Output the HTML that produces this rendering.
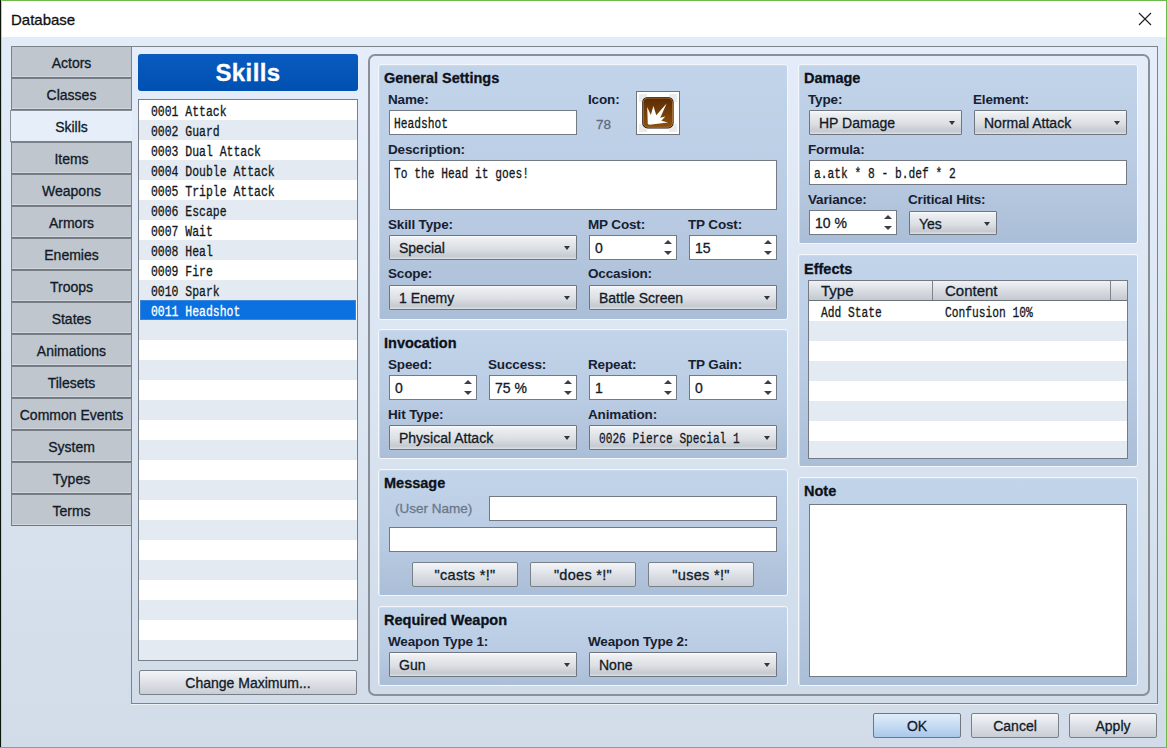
<!DOCTYPE html>
<html><head><meta charset="utf-8">
<style>
*{margin:0;padding:0;box-sizing:border-box}
html,body{width:1167px;height:748px;overflow:hidden}
body{position:relative;font-family:"Liberation Sans",sans-serif;color:#111a28;
background:linear-gradient(#e2ecf9 0px,#e2ecf9 40px,#d2dce8 748px);-webkit-text-stroke:0.3px currentColor}
.a{position:absolute}
.t{position:absolute;white-space:nowrap;font-size:14px;line-height:16px}
.b{font-weight:bold}
.m{font-family:"Liberation Mono",monospace}
#title{left:0;top:0;width:1167px;height:37px;background:#fff}
#gtop{left:0;top:0;width:1167px;height:1px;background:#6fb84a}
#gleft{left:0;top:0;width:2px;height:748px;background:linear-gradient(90deg,#0a160a 0,#0a160a 1px,#b9d3b4 1px)}
#gright{left:1166px;top:0;width:1px;height:748px;background:#6fb84a}
#gbot{left:0;top:747px;width:1167px;height:1px;background:#6fb84a}
.tab{position:absolute;left:11px;width:120px;height:32px;background:#c0c6ce;border:1px solid #7b8189;border-right:none;border-bottom:1px solid #6f757d;box-shadow:inset 0 -1px 0 #d3d8de;
 text-align:center;font-size:14px;line-height:33px;color:#111a28}
.tab.sel{left:10px;width:122px;z-index:2;background:#e6eefa;border-color:#8a9098;border-bottom:1px solid #7b8189;box-shadow:none}
#frame{left:131px;top:46px;width:1027px;height:658px;border:1px solid #7d838b;border-bottom:1px solid #7d838b;box-shadow:0 1px 0 #eef3f9;
 background:linear-gradient(#e4edf9 0,#dbe5f1 400px,#d1dce8 658px)}
#skhead{left:138px;top:54px;width:220px;height:37px;background:linear-gradient(#0a5bc0,#0050b0);border-radius:3px;color:#fff;font-weight:bold;font-size:24px;line-height:38px;letter-spacing:0.4px;text-align:center}
#list{left:138px;top:99px;width:220px;height:562px;border:1px solid #7a8088;background:repeating-linear-gradient(#fff 0,#fff 20px,#e4eaf1 20px,#e4eaf1 40px)}
.row{position:absolute;left:12px;height:20px;line-height:24px;font-size:14.5px;font-family:"Liberation Mono",monospace;color:#101820;transform:scaleX(0.79);transform-origin:0 0}
#selrow{left:1px;top:200px;width:216px;height:20px;background:#0b70e0;border:1px solid #3a85d6}
.btn{position:absolute;border:1px solid #7a8088;border-radius:2px;background:linear-gradient(#f3f5f8,#dde1e6 50%,#c9ced5);text-align:center;font-size:14px;color:#111a28}

#outer{left:368px;top:54px;width:782px;height:642px;border:2px solid #8a9099;border-radius:7px;background:linear-gradient(#e3ecf8,#dbe5f1 50%,#cfdbe9)}
.pnl{position:absolute;background:linear-gradient(#c2d4ea,#b9cce3 55%,#abbed7);border:1px solid #f3f7fc;border-radius:3px;box-shadow:inset 1px 1px 0 #cad9ec}
.h{position:absolute;white-space:nowrap;font-weight:bold;font-size:14.5px;line-height:18px;color:#0c121c;margin-top:-1px}
.l{position:absolute;white-space:nowrap;font-weight:bold;font-size:13.5px;letter-spacing:-0.15px;line-height:16px;color:#172030;-webkit-text-stroke:0;margin-top:-1px}
.inp{position:absolute;background:#fff;border:1px solid #737a83}
.mv{position:absolute;white-space:nowrap;font-family:"Liberation Mono",monospace;font-size:14.5px;line-height:26px;left:4px;top:0;color:#101820;transform:scaleX(0.776);transform-origin:0 0}
.cmb{position:absolute;height:25px;border:1px solid #6f767f;border-radius:1px;background:linear-gradient(#fafbfc 0,#eceef1 12%,#dcdfe3 55%,#c5cad1 88%,#dde0e5 100%)}
.cmb span{position:absolute;left:9px;top:0;line-height:25px;font-size:14px;white-space:nowrap;color:#111a28}
.cmb span.mv{font-size:14.5px;line-height:27px}
.cmb i{position:absolute;right:6px;top:10px;width:0;height:0;border-left:3.5px solid transparent;border-right:3.5px solid transparent;border-top:4px solid #30353c}
.spn{position:absolute;height:25px;background:#fff;border:1px solid #737a83}
.spn span{position:absolute;left:5px;top:0;line-height:25px;font-size:14px;white-space:nowrap;color:#111a28}
.spn i{position:absolute;right:4px;top:4px;width:8px;height:16px}
.spn i::before{content:"";position:absolute;left:0;top:-0.5px;border-left:4px solid transparent;border-right:4px solid transparent;border-bottom:4.5px solid #3a3f46}
.spn i::after{content:"";position:absolute;left:0;top:11px;border-left:4px solid transparent;border-right:4px solid transparent;border-top:4.5px solid #3a3f46}
#iconbox{left:636px;top:91px;width:44px;height:44px;background:#fff;border:1px solid #6f757d}
#tbl{left:808px;top:280px;width:320px;height:179px;border:1px solid #737a83;background:repeating-linear-gradient(#fff 0,#fff 20px,#e4eaf1 20px,#e4eaf1 40px) 0 20px/100% 100% no-repeat,#fff}
#thead{left:0;top:0;width:318px;height:20px;background:linear-gradient(#f0f2f5,#d9dde2 50%,#c4c9d0);border-bottom:1px solid #6d737b}
#thead span{position:absolute;top:0;line-height:20px;font-size:15px;color:#111a28}
#thead b{position:absolute;top:0;width:1px;height:19px;background:#7d838b}
</style></head><body>
<div class="a" id="title"></div>
<div class="t" style="left:11px;top:11px;font-size:15px;line-height:18px;color:#111">Database</div>
<svg class="a" style="left:1137px;top:11px" width="16" height="16"><path d="M2 2L14 14M14 2L2 14" stroke="#222" stroke-width="1.2"/></svg>
<div class="a" id="gtop"></div><div class="a" id="gleft"></div><div class="a" id="gright"></div><div class="a" id="gbot"></div>

<div class="a" id="frame"></div>

<div class="tab" style="top:46px">Actors</div>
<div class="tab" style="top:78px">Classes</div>
<div class="tab sel" style="top:110px">Skills</div>
<div class="tab" style="top:142px">Items</div>
<div class="tab" style="top:174px">Weapons</div>
<div class="tab" style="top:206px">Armors</div>
<div class="tab" style="top:238px">Enemies</div>
<div class="tab" style="top:270px">Troops</div>
<div class="tab" style="top:302px">States</div>
<div class="tab" style="top:334px">Animations</div>
<div class="tab" style="top:366px">Tilesets</div>
<div class="tab" style="top:398px">Common Events</div>
<div class="tab" style="top:430px">System</div>
<div class="tab" style="top:462px">Types</div>
<div class="tab" style="top:494px">Terms</div>

<div class="a" id="skhead">Skills</div>
<div class="a" id="list">
<div class="a" id="selrow"></div>
<div class="row" style="top:0">0001 Attack</div>
<div class="row" style="top:20px">0002 Guard</div>
<div class="row" style="top:40px">0003 Dual Attack</div>
<div class="row" style="top:60px">0004 Double Attack</div>
<div class="row" style="top:80px">0005 Triple Attack</div>
<div class="row" style="top:100px">0006 Escape</div>
<div class="row" style="top:120px">0007 Wait</div>
<div class="row" style="top:140px">0008 Heal</div>
<div class="row" style="top:160px">0009 Fire</div>
<div class="row" style="top:180px">0010 Spark</div>
<div class="row" style="top:200px;color:#fff">0011 Headshot</div>
</div>
<div class="btn" style="left:139px;top:670px;width:218px;height:25px;line-height:25px">Change Maximum...</div>


<div class="a" id="outer"></div>
<div class="pnl" style="left:378px;top:64px;width:410px;height:256px"></div>
<div class="pnl" style="left:378px;top:329px;width:410px;height:130px"></div>
<div class="pnl" style="left:378px;top:469px;width:410px;height:127px"></div>
<div class="pnl" style="left:378px;top:606px;width:410px;height:80px"></div>
<div class="pnl" style="left:798px;top:64px;width:340px;height:180px"></div>
<div class="pnl" style="left:798px;top:254px;width:340px;height:213px"></div>
<div class="pnl" style="left:798px;top:477px;width:340px;height:209px"></div>

<div class="h" style="left:384px;top:70px">General Settings</div>
<div class="l" style="left:388px;top:93px">Name:</div>
<div class="inp" style="left:389px;top:110px;width:188px;height:25px"><span class="mv">Headshot</span></div>
<div class="l" style="left:588px;top:93px">Icon:</div>
<div class="t" style="left:596px;top:117px;font-size:13.5px;color:#5d6c7e">78</div>
<div class="a" id="iconbox"><svg width="40" height="40" style="position:absolute;left:1px;top:1px" viewBox="0 0 40 40">
<defs><linearGradient id="bg" x1="0" y1="0" x2="0" y2="1"><stop offset="0" stop-color="#5a2b02"/><stop offset="0.6" stop-color="#7a4208"/><stop offset="1" stop-color="#8a5010"/></linearGradient></defs>
<rect x="1" y="1" width="38" height="38" fill="#ebebeb"/>
<rect x="9" y="1" width="22" height="38" fill="#fff"/><rect x="1" y="9" width="38" height="22" fill="#fff"/>
<rect x="4.2" y="3.9" width="31.4" height="31.5" rx="5.5" fill="#1a0c02"/>
<rect x="5.3" y="5" width="29.2" height="29.3" rx="4.5" fill="url(#bg)" stroke="#b98450" stroke-width="0.8"/>
<path d="M9.8 31 L9.2 13.9 L12.8 22 L15.4 13 L18.3 22.3 L28.6 10.4 L22.3 24.8 L27.4 23.6 L23.3 27.8 L30 29.4 L11.5 31.8 Z" fill="#fff"/>
</svg></div>
<div class="l" style="left:388px;top:143px">Description:</div>
<div class="inp" style="left:389px;top:160px;width:388px;height:50px"><span class="mv">To the Head it goes!</span></div>

<div class="l" style="left:388px;top:218px">Skill Type:</div>
<div class="cmb" style="left:389px;top:235px;width:188px"><span>Special</span><i></i></div>
<div class="l" style="left:588px;top:218px">MP Cost:</div>
<div class="spn" style="left:589px;top:235px;width:88px"><span>0</span><i></i></div>
<div class="l" style="left:688px;top:218px">TP Cost:</div>
<div class="spn" style="left:689px;top:235px;width:88px"><span>15</span><i></i></div>
<div class="l" style="left:388px;top:267px">Scope:</div>
<div class="cmb" style="left:389px;top:285px;width:188px"><span>1 Enemy</span><i></i></div>
<div class="l" style="left:588px;top:267px">Occasion:</div>
<div class="cmb" style="left:589px;top:285px;width:188px"><span>Battle Screen</span><i></i></div>

<div class="h" style="left:384px;top:335px">Invocation</div>
<div class="l" style="left:388px;top:358px">Speed:</div>
<div class="spn" style="left:389px;top:375px;width:88px"><span>0</span><i></i></div>
<div class="l" style="left:488px;top:358px">Success:</div>
<div class="spn" style="left:489px;top:375px;width:88px"><span>75 %</span><i></i></div>
<div class="l" style="left:588px;top:358px">Repeat:</div>
<div class="spn" style="left:589px;top:375px;width:88px"><span>1</span><i></i></div>
<div class="l" style="left:688px;top:358px">TP Gain:</div>
<div class="spn" style="left:689px;top:375px;width:88px"><span>0</span><i></i></div>
<div class="l" style="left:388px;top:408px">Hit Type:</div>
<div class="cmb" style="left:389px;top:425px;width:188px"><span>Physical Attack</span><i></i></div>
<div class="l" style="left:588px;top:408px">Animation:</div>
<div class="cmb" style="left:589px;top:425px;width:188px"><span class="mv" style="left:9px;transform:scaleX(0.77)">0026 Pierce Special 1</span><i></i></div>

<div class="h" style="left:384px;top:475px">Message</div>
<div class="t" style="left:395px;top:501px;font-size:13.5px;color:#6b7889">(User Name)</div>
<div class="inp" style="left:489px;top:496px;width:288px;height:25px"></div>
<div class="inp" style="left:389px;top:527px;width:388px;height:25px"></div>
<div class="btn" style="left:412px;top:562px;width:106px;height:25px;line-height:24px;font-size:14.5px;letter-spacing:0.3px">"casts *!"</div>
<div class="btn" style="left:530px;top:562px;width:106px;height:25px;line-height:24px;font-size:14.5px;letter-spacing:0.3px">"does *!"</div>
<div class="btn" style="left:648px;top:562px;width:106px;height:25px;line-height:24px;font-size:14.5px;letter-spacing:0.3px">"uses *!"</div>

<div class="h" style="left:384px;top:612px">Required Weapon</div>
<div class="l" style="left:388px;top:635px">Weapon Type 1:</div>
<div class="cmb" style="left:389px;top:652px;width:188px"><span>Gun</span><i></i></div>
<div class="l" style="left:588px;top:635px">Weapon Type 2:</div>
<div class="cmb" style="left:589px;top:652px;width:188px"><span>None</span><i></i></div>

<div class="h" style="left:804px;top:70px">Damage</div>
<div class="l" style="left:808px;top:93px">Type:</div>
<div class="cmb" style="left:809px;top:110px;width:153px"><span>HP Damage</span><i></i></div>
<div class="l" style="left:973px;top:93px">Element:</div>
<div class="cmb" style="left:974px;top:110px;width:153px"><span>Normal Attack</span><i></i></div>
<div class="l" style="left:808px;top:143px">Formula:</div>
<div class="inp" style="left:809px;top:160px;width:318px;height:25px"><span class="mv" style="left:4px">a.atk * 8 - b.def * 2</span></div>
<div class="l" style="left:808px;top:193px">Variance:</div>
<div class="spn" style="left:809px;top:210px;width:88px"><span>10 %</span><i></i></div>
<div class="l" style="left:908px;top:193px">Critical Hits:</div>
<div class="cmb" style="left:909px;top:211px;width:88px;height:24px"><span>Yes</span><i></i></div>

<div class="h" style="left:804px;top:261px">Effects</div>
<div class="a" id="tbl">
<div class="a" id="thead"><span style="left:12px">Type</span><span style="left:136px">Content</span><b style="left:123px"></b><b style="left:301px"></b></div>
<div class="mv" style="left:12px;top:22px;line-height:20px">Add State</div>
<div class="mv" style="left:136px;top:22px;line-height:20px">Confusion 10%</div>
</div>

<div class="h" style="left:804px;top:483px">Note</div>
<div class="inp" style="left:809px;top:504px;width:318px;height:173px"></div>


<div class="btn" style="left:873px;top:713px;width:88px;height:25px;line-height:25px;background:linear-gradient(#e0edfa,#c6dcf3 50%,#a9c7e9);border-color:#6f767f">OK</div>
<div class="btn" style="left:971px;top:713px;width:88px;height:25px;line-height:25px">Cancel</div>
<div class="btn" style="left:1069px;top:713px;width:88px;height:25px;line-height:25px">Apply</div>
</body></html>
